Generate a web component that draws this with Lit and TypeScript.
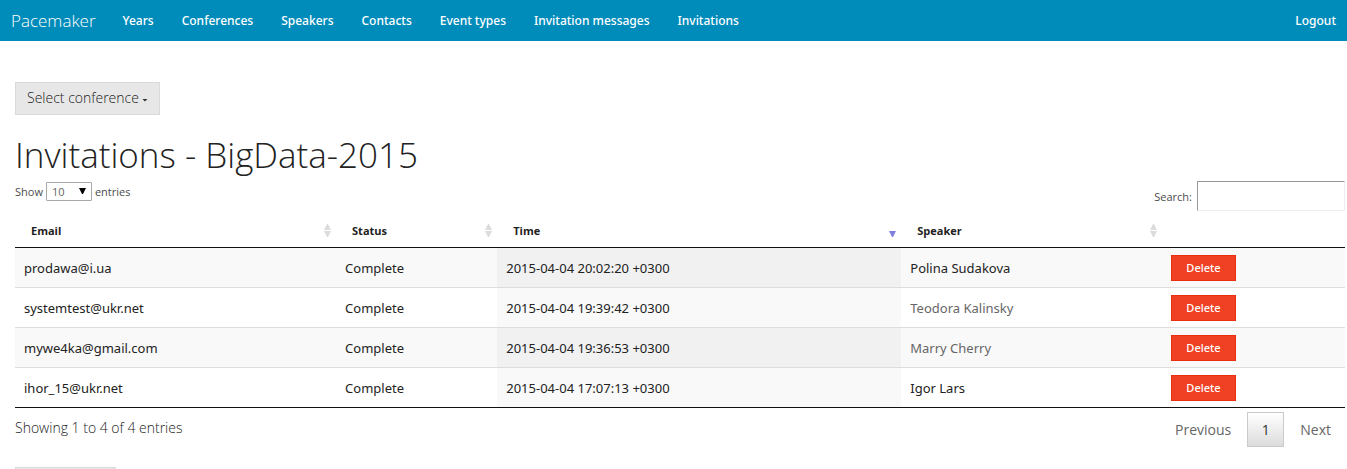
import { LitElement, html, css } from "lit";
import { customElement, property } from "lit/decorators.js";
import { classMap } from "lit/directives/class-map.js";

interface Invitation {
  email: string;
  status: string;
  time: string;
  speaker: string;
  muted?: boolean;
}

const NAV = ["Years", "Conferences", "Speakers", "Contacts", "Event types", "Invitation messages", "Invitations"];

const ROWS: Invitation[] = [
  { email: "prodawa@i.ua", status: "Complete", time: "2015-04-04 20:02:20 +0300", speaker: "Polina Sudakova" },
  { email: "systemtest@ukr.net", status: "Complete", time: "2015-04-04 19:39:42 +0300", speaker: "Teodora Kalinsky", muted: true },
  { email: "mywe4ka@gmail.com", status: "Complete", time: "2015-04-04 19:36:53 +0300", speaker: "Marry Cherry", muted: true },
  { email: "ihor_15@ukr.net", status: "Complete", time: "2015-04-04 17:07:13 +0300", speaker: "Igor Lars" },
];

@customElement("sort-icon")
class SortIcon extends LitElement {
  @property({ type: Boolean }) active = false;

  static styles = css`
    :host { display: block; width: 7px; height: 13px; }
    svg { display: block; }
    .idle { fill: #dcdcdc; }
    .on { fill: #7f7fe0; }
  `;

  render() {
    return html`<svg width="7" height="13" viewBox="0 0 7 13" aria-hidden="true">
      ${this.active
        ? html`<svg><path class="on" d="M0 7h7L4 13H3z" /></svg>`
        : html`<svg><path class="idle" d="M3 0h1l3 6H0zM0 7h7L4 13H3z" /></svg>`}
    </svg>`;
  }
}

@customElement("app-root")
class AppRoot extends LitElement {
  static styles = css`
    :host { display: block; height: 100vh; overflow: hidden auto; scrollbar-width: none;
      font-family: "Open Sans", sans-serif; color: #222; background: #fff; }
    * { box-sizing: border-box; }
    a { color: inherit; text-decoration: none; }
    button { font: inherit; cursor: pointer; border-radius: 0; }

    .bar { display: flex; align-items: center; height: 41px; padding: 0 11px; background: #008cba; color: #fff;
      font: 500 12px/40px "Noto Sans", sans-serif; }
    .brand { font: 300 17px/40px "Open Sans", sans-serif; margin-right: 27px; }
    .links { display: flex; gap: 28px; flex: 1; }

    main { padding: 41px 2px 0 15px; }
    .pick { display: inline-flex; align-items: center; gap: 3px; height: 33px; padding: 0 11px 2px;
      border: 1px solid #dadada; background: #e7e7e7; color: #222; font-size: 14px; font-weight: 300; }
    .caret { width: 6px; height: 3px; margin-top: 5px; background: #333; clip-path: polygon(0 0, 100% 0, 50% 100%); }
    h1 { margin: 15px 0 0; font-weight: 300; font-size: 35px; line-height: 50px; }

    .tools { display: flex; justify-content: space-between; align-items: flex-start; font-size: 11px; color: #4d4d4d; }
    .tools label { display: flex; align-items: center; }
    .length { gap: 3px; height: 22px; }
    .wrap { position: relative; display: block; }
    select { appearance: none; display: block; width: 46px; height: 19px; padding: 0 5px; border: 1px solid #a9a9a9; border-radius: 1px;
      background: #fff; color: #666; font: 11px "Open Sans", sans-serif; }
    .arrow { position: absolute; right: 6px; top: 6px; pointer-events: none; display: block; }
    .search { gap: 5px; padding-top: 1px; }
    .search input { width: 148px; height: 30px; padding: 4px; font: 12px "Open Sans", sans-serif;
      border: 1px solid; border-color: #999 #eee #eee #999; border-radius: 0; background: #fff; }

    table { width: 100%; table-layout: fixed; border-collapse: separate; border-spacing: 0; margin-top: 3px;
      border-bottom: 1px solid #111; }
    .c-email { width: 24.14%; }
    .c-status { width: 12.12%; }
    .c-time { width: 30.38%; }
    .c-speaker { width: 19.63%; }
    th { height: 34px; padding: 0 5px 0 16px; border-bottom: 1px solid #111; text-align: left; font-size: 11px; font-weight: 700; }
    .head { display: flex; justify-content: space-between; align-items: center; }
    td { height: 40px; padding: 0 9px; font: 13px/20px "Noto Sans", sans-serif; border-bottom: 1px solid #ddd; }
    tbody tr:last-child td { height: 39px; border-bottom: 0; }
    tbody tr:nth-child(odd) td { background: #f9f9f9; }
    tbody tr:nth-child(odd) .sorted { background: #f1f1f1; }
    tbody tr:nth-child(even) .sorted { background: #f9f9f9; }
    .muted { color: #666; }
    .delete { display: block; height: 26px; padding: 0 14px; border: 1px solid #ea2f10; background: #f04124; color: #fff;
      font: 500 11px/20px "Noto Sans", sans-serif; }

    .foot { display: flex; justify-content: space-between; font-size: 14px; line-height: 20px; }
    .info { padding-top: 10px; color: #222; font-weight: 300; }
    .pages { display: flex; align-items: center; gap: 2px; padding-top: 4px; }
    .pages button { height: 35px; min-width: 37px; padding: 0 13px; border: 1px solid transparent; background: none; color: #666; }
    .pages .current { border-color: #cacaca; background: linear-gradient(#fff, #dcdcdc); color: #333; }
    .more { display: block; width: 101px; height: 33px; margin-top: 20px; border: 1px solid #dadada; background: #e7e7e7; }
  `;

  private heading(label: string, active = false) {
    return html`<th scope="col"><div class="head">${label}<sort-icon ?active=${active}></sort-icon></div></th>`;
  }

  render() {
    return html`
      <nav class="bar">
        <a class="brand" href="#">Pacemaker</a>
        <div class="links">${NAV.map((n) => html`<a href="#">${n}</a>`)}</div>
        <a href="#">Logout</a>
      </nav>
      <main>
        <button class="pick">Select conference<span class="caret"></span></button>
        <h1>Invitations - BigData-2015</h1>
        <div class="tools">
          <label class="length">Show
            <span class="wrap">
              <select><option>10</option><option>25</option><option>50</option><option>100</option></select>
              <svg class="arrow" width="7" height="6" viewBox="0 0 7 6" aria-hidden="true"><path d="M0 0h7L4 6H3z" /></svg>
            </span>
            entries</label>
          <label class="search">Search: <input type="search" /></label>
        </div>
        <table>
          <colgroup><col class="c-email" /><col class="c-status" /><col class="c-time" /><col class="c-speaker" /><col /></colgroup>
          <thead>
            <tr>
              ${this.heading("Email")}${this.heading("Status")}${this.heading("Time", true)}${this.heading("Speaker")}
              <th></th>
            </tr>
          </thead>
          <tbody>
            ${ROWS.map((r) => html`<tr>
              <td>${r.email}</td>
              <td>${r.status}</td>
              <td class="sorted">${r.time}</td>
              <td class=${classMap({ muted: !!r.muted })}>${r.speaker}</td>
              <td><button class="delete">Delete</button></td>
            </tr>`)}
          </tbody>
        </table>
        <div class="foot">
          <div class="info">Showing 1 to 4 of 4 entries</div>
          <div class="pages"><button>Previous</button><button class="current">1</button><button>Next</button></div>
        </div>
        <button class="more" aria-label="More"></button>
      </main>
    `;
  }
}
